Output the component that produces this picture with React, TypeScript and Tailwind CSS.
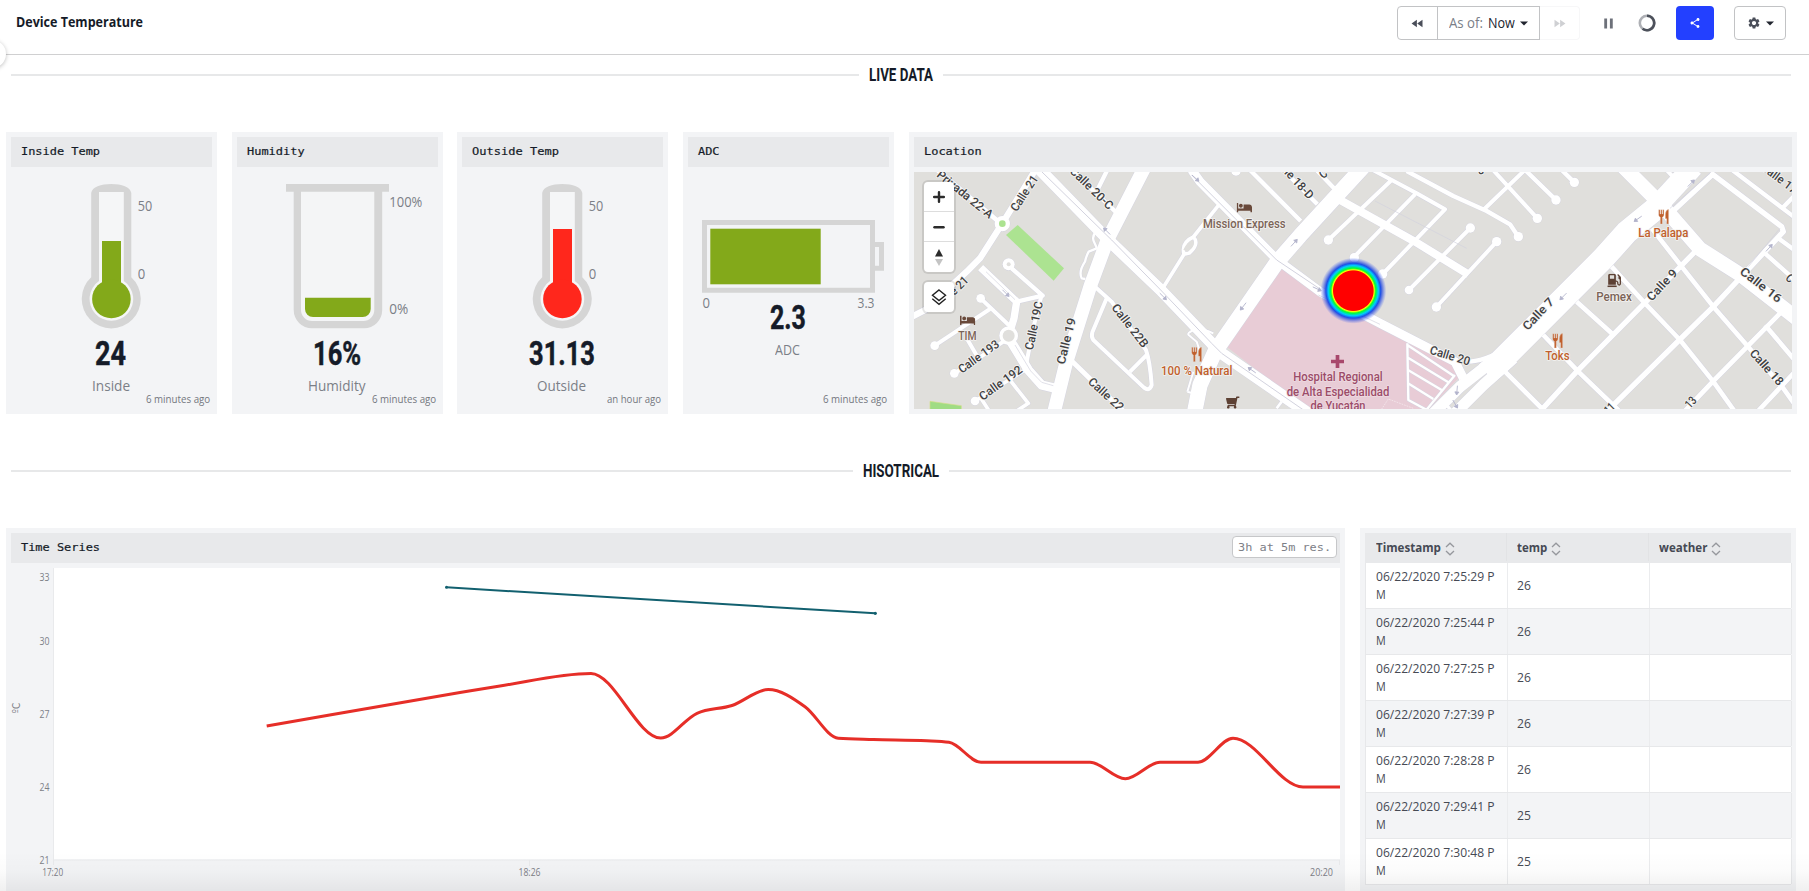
import { useLayoutEffect, useRef, type ReactNode } from "react";
import { FaBed, FaGasPump, FaShoppingCart } from "react-icons/fa";
import { MdFastForward, MdFastRewind, MdPause, MdSettings, MdShare } from "react-icons/md";

/* Single line of text condensed or widened to an exact width. */
function Fit({ w, className = "", children }: { w: number; className?: string; children: ReactNode }) {
  const ref = useRef<HTMLSpanElement>(null);
  useLayoutEffect(() => {
    const el = ref.current;
    if (el) el.style.transform = `scaleX(${w / el.offsetWidth})`;
  }, [w]);
  return (
    <span className={`block whitespace-nowrap ${className}`} style={{ width: w }}>
      <span ref={ref} className="inline-block origin-left">
        {children}
      </span>
    </span>
  );
}

const GREEN = "#83a91a";
const RED = "#ff271c";
const GREY = "#d5d5d5";

function Caret() {
  return (
    <svg width="8" height="5" viewBox="0 0 8 5" className="shrink-0">
      <path d="M0 0.4H8L4 4.6Z" fill="#20242e" />
    </svg>
  );
}

function Header() {
  return (
    <header className="relative flex h-[55px] shrink-0 items-start border-b border-[#d0d0d1] pl-4 pr-[23px] pt-1.5">
      <Fit w={127} className="mt-1.5 text-sm font-bold leading-5 text-[#151b28]">
        Device Temperature
      </Fit>
      <div className="ml-auto flex h-[34px] items-center">
        <div className="flex h-full">
          <button className="flex w-[41px] items-center justify-center rounded-l border border-[#c2c3c5] text-[#4a4e59]">
            <MdFastRewind size={15} />
          </button>
          <button className="-ml-px flex w-[103px] items-center justify-center border border-[#c2c3c5]">
            <Fit w={34} className="text-sm font-medium leading-5 text-[#7b7f89]">As of:</Fit>
            <Fit w={27} className="ml-[5px] mr-[5px] text-sm font-medium leading-5 text-[#20242e]">Now</Fit>
            <Caret />
          </button>
          <button className="flex w-10 items-center justify-center rounded-r border border-l-0 border-[#f7f7f8] text-[#cfd0d3]">
            <MdFastForward size={15} />
          </button>
        </div>
        <MdPause size={17} className="ml-[20px] text-[#6d717a]" />
        <svg width="18" height="18" viewBox="0 0 18 18" className="ml-[21px]">
          <circle cx="9" cy="9" r="7.2" fill="none" stroke="#aeb0b5" strokeWidth="2.6" />
          <path d="M9 1.8A7.2 7.2 0 1 1 4.6 14.7" fill="none" stroke="#4d515b" strokeWidth="2.6" />
        </svg>
        <button className="ml-5 flex h-full w-[38px] items-center justify-center rounded bg-[#2340ff] text-white">
          <MdShare size={12} />
        </button>
        <button className="ml-5 flex h-full w-[52px] items-center justify-center gap-[5px] rounded border border-[#c2c3c5] text-[#4a4e59]">
          <MdSettings size={14} />
          <Caret />
        </button>
      </div>
      <div className="absolute -left-[22px] top-[40px] size-7 rounded-full bg-white shadow-[0_1px_4px_rgba(0,0,0,0.25)]" />
    </header>
  );
}

function Divider({ w, children }: { w: number; children: ReactNode }) {
  return (
    <div className="flex h-10 items-center gap-2.5 pl-[11px] pr-[18px]">
      <div className="h-0.5 flex-1 bg-[#e7e8e9]" />
      <Fit w={w} className="-mt-px font-[Roboto] text-[19px] font-bold leading-10 text-[#151b28]">
        {children}
      </Fit>
      <div className="h-0.5 flex-1 bg-[#e7e8e9]" />
    </div>
  );
}

function Title({ children }: { children: string }) {
  return (
    <Fit
      w={children.length * 7.2}
      className="font-['DejaVu_Sans_Mono'] text-[11px] leading-[30px] text-[#151b28] [-webkit-text-stroke:0.2px_#151b28]"
    >
      {children}
    </Fit>
  );
}

function Card({ title, className = "", children }: { title: string; className?: string; children: ReactNode }) {
  return (
    <section className={`relative flex flex-col bg-[#f3f4f6] pt-[5px] ${className}`}>
      <div className="mx-[5px] flex h-[30px] shrink-0 bg-[#e8e9eb] px-2.5 pb-[2px]">
        <Title>{title}</Title>
      </div>
      {children}
    </section>
  );
}

type GaugeProps = { title: string; value: string; vw: number; label: string; lw: number; ago: string; aw: number; short?: boolean; children: ReactNode };

function Gauge({ title, value, vw, label, lw, ago, aw, short, children }: GaugeProps) {
  return (
    <Card title={title} className="h-[282px] w-[211px] items-stretch">
      <svg
        width="211"
        height={short ? 123 : 159}
        viewBox={short ? "0 -5 211 123" : "0 -5 211 159"}
        className="shrink-0 overflow-visible"
        fontFamily="'Open Sans', sans-serif"
        fontSize="14"
        fontWeight="500"
        fill="#7b7f87"
      >
        {children}
      </svg>
      <div className="mt-[9px] flex flex-col items-center pr-[2px]">
        <Fit w={vw} className="font-[Roboto] text-[34px] font-bold leading-9 text-[#151b28] [-webkit-text-stroke:0.5px_#151b28]">{value}</Fit>
        <Fit w={lw} className="mt-[5px] text-sm font-medium leading-5 text-[#7b7f87]">{label}</Fit>
      </div>
      <div className="absolute bottom-[7px] right-[7px]">
        <Fit w={aw} className="text-[10.5px] font-medium leading-4 text-[#74777e]">{ago}</Fit>
      </div>
    </Card>
  );
}

function Thermometer({ top, color }: { top: number; color: string }) {
  return (
    <>
      <path d="M85.2 21C86 15 95 12 105.3 12S124.500 15 125.300 21V105.300A29.500 29.500 0 1 1 85.200 105.300Z" fill={GREY} />
      <path d="M93 20H117.800V109A21.800 21.800 0 1 1 93 109Z" fill="#f5f6f7" />
      <rect x="96" y={top} width="19" height={127 - top} fill={color} />
      <circle cx="105.400" cy="127" r="19.300" fill={color} />
      <text x="131.700" y="39" textLength="14.500" lengthAdjust="spacingAndGlyphs">50</text>
      <text x="131.700" y="107" textLength="7.500" lengthAdjust="spacingAndGlyphs">0</text>
    </>
  );
}

/* ---------- Map ---------- */

type Road = [d: string, w: number];

/* Each tile is drawn in thirds of a pixel from its own left edge. */
const tiles: { x: number; roads: Road[]; dots: [number, number, number][] }[] = [
  {
    x: 900,
    roads: [
      ["M112 135L290 285", 14],
      ["M412 125L307 295L240 400L200 440L75 555L30 578", 19],
      ["M335 430L428 512L350 530", 13],
      ["M242 428L350 530L342 580L326 632", 22],
      ["M242 520L326 600", 12],
      ["M104 662L270 552", 12],
      ["M163 745L235 700L310 650M200 640L235 700", 12],
      ["M330 645L385 735L425 780L465 790", 28],
      ["M425 510L402 600L375 735", 12],
      ["M225 828L375 735M240 815L272 865M330 765L385 835L335 868", 11],
      ["M510 130L652 265M622 135L592 195", 13],
      ["M588 318C570 345 585 350 590 370L566 380Q558 395 555 410Q535 440 545 460L556 462", 7],
      ["M785 495L852 388M852 388C845 360 860 345 880 336C895 350 885 370 868 384ZM880 336L960 235", 11],
      ["M585 485L635 530L738 675Q750 710 755 780Q748 800 732 788L580 645Q573 635 577 622L620 520M690 740L740 690", 12],
      ["M510 703L680 868", 15],
      ["M940 625Q900 605 880 615T866 630L890 650L900 680M862 800L880 740M862 800L885 806", 6],
      ["M416 130L625 345L782 495L935 655L965 685L1225 865", 35],
      ["M735 125L622 345L572 480L498 715L460 870", 41],
    ],
    dots: [[307, 296, 23], [326, 418, 18], [242, 520, 13], [104, 662, 13], [163, 745, 13], [225, 828, 13], [326, 632, 28]],
  },
  {
    x: 1200,
    roads: [
      ["M140 125L302 288M240 125L352 238M340 125L402 190", 13],
      ["M-25 135L0 170L232 405L360 500L540 595L765 710L790 760", 27],
      ["M420 225L555 300L645 350L805 448", 24],
      ["M575 165L385 345M645 208L463 395M500 125L650 205L735 253L548 447M811 309L627 495M890 350L709 546", 12],
      ["M620 138L760 213L860 258L930 298L955 335", 13],
      ["M850 255L985 125M870 125L1012 280", 12],
      ["M810 710Q870 705 940 655", 13],
      ["M230 850L245 830", 8],
      ["M622 655L625 825L690 860M622 660L765 755M624 698L745 772M624 735L725 795M624 775L700 822M765 750L675 860", 7],
      ["M490 125L300 332L232 410L45 680L0 780L-18 870", 46],
      ["M940 660L780 785L700 865", 34],
      ["M940 700L850 780L765 865", 34],
      ["M730 828L760 865", 10],
    ],
    dots: [[108, 138, 14], [385, 345, 14], [463, 398, 14], [548, 447, 14], [811, 309, 14], [627, 495, 13], [890, 350, 14], [709, 546, 14], [1012, 280, 14], [955, 335, 14]],
  },
  {
    x: 1500,
    roads: [
      ["M65 125L168 225M175 125L223 172", 13],
      ["M495 130L535 172", 12],
      ["M515 262L638 148L845 305L850 320L740 438L640 545L535 648L320 860", 16],
      ["M690 130L885 278M848 248L890 205M835 340L890 380M795 385L890 470", 13],
      ["M335 425L435 535L540 645L640 770L708 865", 14],
      ["M455 310L545 425L640 545L740 660L850 790L900 860", 14],
      ["M590 375L435 533L230 740L115 865", 16],
      ["M230 530L335 625M130 630L235 740L360 860M15 740L135 860", 14],
      ["M845 560L640 768L545 868M795 600L890 712M890 735L765 868", 14],
      ["M370 125L485 240L600 372L720 448L890 580", 44],
      ["M580 125L460 255", 62],
      ["M480 240L380 322L310 400L0 710L-40 745", 70],
    ],
    dots: [[168, 225, 14], [223, 172, 14]],
  },
];

type Label = [text: string, x: number, y: number, angle: number, len: number, color?: string];

const STREET = "#3f3f42";
const BROWN = "#7b6457";
const ORANGE = "#c05f2c";
const PINK = "#9c4c69";

const labels: Label[] = [
  ["Privada 22-A", 195, 208, 39, 205],
  ["Calle 21", 373, 205, -57, 120],
  ["Calle 21", 157, 502, -45, 120],
  ["Calle 20-C", 575, 190, 44, 165],
  ["Calle 19C", 402, 602, -78, 147],
  ["Calle 19", 499, 648, -76, 142],
  ["Calle 22B", 690, 602, 52, 155],
  ["Calle 193", 236, 695, -36, 142],
  ["Calle 192", 302, 774, -36, 150],
  ["Calle 22", 618, 808, 42, 130],
  ["TIM", 202, 635, 0, 55, BROWN],
  ["100 % Natural", 890, 738, 0, 214, ORANGE],
  ["Mission Express", 1033, 298, 0, 248, BROWN],
  ["Hospital Regional", 1314, 757, 0, 268, PINK],
  ["de Alta Especialidad", 1314, 801, 0, 308, PINK],
  ["de Yucatán", 1314, 845, 0, 165, PINK],
  ["Calle 20", 1650, 692, 17, 124],
  ["Calle 18-D", 1180, 158, 47, 160],
  ["C", 1270, 147, -40, 20],
  ["8", 1745, 136, 20, 18],
  ["Calle 7", 1915, 567, -47, 118],
  ["Calle 9", 2286, 480, -47, 115],
  ["La Palapa", 2290, 325, 0, 150, ORANGE],
  ["Pemex", 2142, 516, 0, 107, BROWN],
  ["Toks", 1972, 694, 0, 73, ORANGE],
  ["Calle 16", 2583, 480, 38, 148],
  ["Calle 18", 2600, 727, 48, 132],
  ["Calle 17", 2638, 160, 37, 125],
  ["C", 2670, 460, 45, 20],
  ["13", 2372, 832, -48, 32],
  ["11", 2128, 850, -45, 30],
];

/* One-way arrows: x, y, angle */
const arrows: [number, number, number][] = [
  [620, 318, 225], [790, 515, 45], [887, 160, 42], [318, 505, 45],
  [1183, 353, -48], [1029, 545, 128], [1252, 492, 25], [1055, 735, 215], [1671, 797, 95], [1666, 838, 60],
  [2374, 174, -45], [2213, 282, 145], [1989, 515, 135], [2608, 368, -48],
];

function Utensils({ x, y }: { x: number; y: number }) {
  return (
    <g transform={`translate(${x} ${y})`} fill={ORANGE} stroke="#efe9e4" strokeWidth="1">
      <path d="M-15 -21H-11V-8H-9V-21H-5V-8H-3V-21H1V-4Q0 0 -4 2V22H-10V2Q-14 0 -15 -4Z" />
      <path d="M15 -22V22H9V6H5V-8Q6 -20 15 -22Z" />
    </g>
  );
}

function MapView() {
  return (
    <svg width="878" height="237" viewBox="914 172 878 237" className="block bg-[#e0dfdc]">
      <defs>
        <radialGradient id="heat">
          <stop offset="0.6" stopColor="#f00" />
          <stop offset="0.63" stopColor="#ff0" />
          <stop offset="0.68" stopColor="#0f3" />
          <stop offset="0.76" stopColor="#0cf" />
          <stop offset="0.83" stopColor="#1f4fe6" />
          <stop offset="0.88" stopColor="#2348e0" stopOpacity="0.65" />
          <stop offset="1" stopColor="#4060f0" stopOpacity="0" />
        </radialGradient>
      </defs>
      <g transform="translate(900 125) scale(0.33333)">
        <path d="M353 300L492 430L461 467L318 330Z" fill="#ace391" />
        <path d="M90 829L184 842V860H90Z" fill="#a0dc84" stroke="#d5e08a" strokeWidth="2" />
        <path d="M1143 430L1265 505L1520 650L1660 720L1675 760L1580 860H1230L980 665Z" fill="#e8ccd6" />
      </g>
      {tiles.map((t) => (
        <g key={t.x} transform={`translate(${t.x} 125) scale(0.33333)`} fill="none" stroke="#d3d3e0" strokeLinejoin="round">
          {t.roads.map(([d, w]) => <path key={d} d={d} strokeWidth={w + 2.5} />)}
          {t.dots.map(([x, y, r]) => <circle key={`${x}-${y}`} cx={x} cy={y} r={r} strokeWidth="2.5" />)}
        </g>
      ))}
      {tiles.map((t) => (
        <g key={t.x} transform={`translate(${t.x} 125) scale(0.33333)`} fill="none" stroke="#fff" strokeLinejoin="round">
          {t.roads.map(([d, w]) => <path key={d} d={d} strokeWidth={w} />)}
          {t.dots.map(([x, y, r]) => <circle key={`${x}-${y}`} cx={x} cy={y} r={r} fill="#fff" stroke="none" />)}
        </g>
      ))}
      <g transform="translate(900 125) scale(0.33333)">
        <circle cx="307" cy="296" r="10" fill="#ace391" />
        <circle cx="326" cy="418" r="6" fill="#e0dfdc" />
        <circle cx="326" cy="632" r="18" fill="#e0dfdc" />
        <path d="M850 374Q862 350 878 345Q886 356 876 368L862 380Z" fill="#e0dfdc" />
        <g fill="none" stroke="#d2d2de" strokeWidth="3">
          <path d="M425 140L635 345L782 495L935 655L965 685L1225 865M875 150L1130 405L1260 492" />
          <path d="M345 660L392 738L425 772L460 782M258 440L345 524" strokeWidth="2" />
          <path d="M1255 510L1440 598M1425 228L1700 370M2310 250L2430 145M2545 425L2640 310" strokeWidth="2" />
          <path d="M1440 860L1465 822L1540 850" strokeWidth="2" strokeDasharray="5 3" stroke="#f7eef2" />
        </g>
        <g fill="none" stroke="#b3b4cc" strokeWidth="2.500">
          {arrows.map(([x, y, a]) => (
            <path key={`${x}-${y}`} transform={`translate(${x} ${y}) rotate(${a})`} d="M-15 0H12M4 -6L13 0L4 6Z" fill="#b3b4cc" />
          ))}
        </g>
        <g textAnchor="middle" fontFamily="Roboto, sans-serif" fontSize="36" fontWeight="500" strokeWidth="5" strokeLinejoin="round" paintOrder="stroke">
          {labels.map(([text, x, y, a, len, color]) => (
            <text
              key={`${text}-${x}`}
              transform={`translate(${x} ${y}) rotate(${a})`}
              y={color ? 11 : 12}
              textLength={len}
              lengthAdjust="spacingAndGlyphs"
              fill={color ?? STREET}
              stroke={color === PINK ? "#eedbe2" : "#f4f3f1"}
            >
              {text}
            </text>
          ))}
        </g>
        <FaBed x={180} y={563} size={46} color="#69493a" />
        <FaBed x={1010} y={225} size={46} color="#69493a" />
        <FaGasPump x={2122} y={446} size={41} color="#5d4134" />
        <g transform="translate(1018 812) scale(-1 1)">
          <FaShoppingCart x={-1} y={0} size={41} color="#5d4134" />
        </g>
        <Utensils x={890} y={688} />
        <Utensils x={2291} y={275} />
        <Utensils x={1973} y={647} />
        <path d="M1307 690H1318V704H1332V715H1318V729H1307V715H1293V704H1307Z" fill="#a8486c" />
        <circle cx="1360" cy="497" r="99" fill="url(#heat)" />
      </g>
    </svg>
  );
}

function LocationCard() {
  const box = "rounded bg-white shadow-[0_0_0_2px_rgba(0,0,0,0.1)]";
  return (
    <Card title="Location" className="h-[282px] w-[888px]">
      <div className="relative mx-[5px] mt-[5px]">
        <MapView />
        <div className={`absolute left-2.5 top-2.5 flex h-[90px] w-[30px] flex-col divide-y divide-[#ddd] ${box}`}>
          <svg viewBox="0 0 30 30" className="h-[30px] w-full"><path d="M15 10.500V20.500M10 15.500H20" stroke="#2b2b2b" strokeWidth="2.500" strokeLinecap="round" /></svg>
          <svg viewBox="0 0 30 30" className="h-[30px] w-full"><path d="M10.300 15.700H19.700" stroke="#2b2b2b" strokeWidth="2.500" strokeLinecap="round" /></svg>
          <svg viewBox="0 0 30 30" className="h-[30px] w-full"><path d="M15 7L19 14.500H11Z" fill="#2b2b2b" /><path d="M15 24L19 17H11Z" fill="#c4c4c4" /></svg>
        </div>
        <div className={`absolute left-2.5 top-[110px] size-[30px] ${box}`}>
          <svg viewBox="0 0 30 30" className="size-full" fill="none" stroke="#222" strokeWidth="1.400">
            <path d="M15 8L21.500 13.300L15 18.500L8.500 13.300Z" />
            <path d="M8.300 16.800L15 22.300L21.700 16.800" />
          </svg>
        </div>
      </div>
    </Card>
  );
}

/* ---------- Time series ---------- */

const series: [number, number][] = [
  [266.7, 726], [460, 692.5], [500, 686], [591, 673.5], [660.7, 738], [697, 713.3], [732, 705.5], [768.3, 689.5],
  [805, 706.7], [838.3, 738.2], [873.3, 739.5], [926.7, 740.8], [949, 742.3], [981, 762.3],
  [1090, 762.3], [1125.3, 778.8], [1160, 762.3], [1198, 762.3], [1233, 738.3], [1303, 787], [1340, 787],
];

/* Monotone cubic interpolation through the points. */
function monotone(p: [number, number][]) {
  const n = p.length;
  const s = p.slice(1).map(([x, y], i) => (y - p[i][1]) / (x - p[i][0]));
  const m = p.map((_, i) => {
    if (i === 0) return s[0];
    if (i === n - 1) return s[n - 2];
    const a = s[i - 1], b = s[i];
    if (a * b <= 0) return 0;
    const h0 = p[i][0] - p[i - 1][0], h1 = p[i + 1][0] - p[i][0];
    const q = (a * h1 + b * h0) / (h0 + h1);
    return Math.sign(a) * Math.min(2 * Math.abs(a), 2 * Math.abs(b), Math.abs(q));
  });
  let d = `M${p[0][0]} ${p[0][1]}`;
  for (let i = 0; i < n - 1; i++) {
    const dx = (p[i + 1][0] - p[i][0]) / 3;
    d += `C${p[i][0] + dx} ${p[i][1] + m[i] * dx} ${p[i + 1][0] - dx} ${p[i + 1][1] - m[i + 1] * dx} ${p[i + 1][0]} ${p[i + 1][1]}`;
  }
  return d;
}

const yTicks: [string, number][] = [["33", 581], ["30", 645], ["27", 718], ["24", 791], ["21", 864]];
const xTicks: [string, number, number][] = [["17:20", 52.7, 21], ["18:26", 529.5, 22], ["20:20", 1321.5, 23]];

function TimeSeries() {
  return (
    <section className="h-[363px] w-[1339px] bg-[#f3f4f6] p-[5px] pb-0">
      <div className="flex h-[30px] items-start justify-between bg-[#e8e9eb] pl-2.5 pr-[3px]">
        <Title>Time Series</Title>
        <div className="mt-[3px] flex h-[22px] items-center justify-center rounded border border-[#c6c7c9] bg-white px-[5px]">
          <Fit w={93} className="mt-px font-['DejaVu_Sans_Mono'] text-[11px] leading-5 text-[#7d8087]">3h at 5m res.</Fit>
        </div>
      </div>
      <svg width="1329" height="328" viewBox="11 563 1329 328" className="block" fontFamily="'Open Sans', sans-serif" fontSize="10" fontWeight="500" fill="#7d8087">
        <rect x="54" y="568" width="1286" height="291.500" fill="#fff" />
        <path d="M53.500 568V865M53 860H1340M529.500 860V866M1339.500 860V865" fill="none" stroke="#e9eaec" />
        {yTicks.map(([t, y]) => (
          <text key={t} x="49.500" y={y} textAnchor="end" textLength="10" lengthAdjust="spacingAndGlyphs">{t}</text>
        ))}
        {xTicks.map(([t, x, w]) => (
          <text key={t} x={x} y="876" textAnchor="middle" textLength={w} lengthAdjust="spacingAndGlyphs">{t}</text>
        ))}
        <text transform="translate(19.500 708) rotate(-90)" textAnchor="middle" fontFamily="'DejaVu Sans', sans-serif" textLength="10.500" lengthAdjust="spacingAndGlyphs">ºC</text>
        <path d="M446.500 587.300L875 613.300" stroke="#12606f" strokeWidth="2" />
        <circle cx="446.500" cy="587.300" r="1.500" fill="#12606f" />
        <circle cx="875.300" cy="613.300" r="1.600" fill="#12606f" />
        <path d={monotone(series)} fill="none" stroke="#e62e28" strokeWidth="3" />
      </svg>
    </section>
  );
}

/* ---------- Table ---------- */

const rows: [string, string][] = [
  ["06/22/2020 7:25:29 P", "26"], ["06/22/2020 7:25:44 P", "26"], ["06/22/2020 7:27:25 P", "26"], ["06/22/2020 7:27:39 P", "26"],
  ["06/22/2020 7:28:28 P", "26"], ["06/22/2020 7:29:41 P", "25"], ["06/22/2020 7:30:48 P", "25"],
];

function Sort() {
  return (
    <svg width="10" height="14" viewBox="0 0 10 14" className="ml-[4px] mt-1" fill="none" stroke="#96989d" strokeWidth="1.300">
      <path d="M1 5L5 1.200L9 5M1 9L5 12.800L9 9" />
    </svg>
  );
}

function DataTable() {
  const cols = "grid grid-cols-[142px_142px_142px]";
  return (
    <section className="h-[363px] w-[436px] overflow-hidden bg-[#f3f4f6] px-[5px] pt-[5px]">
      <div className={`${cols} h-[30px] bg-[#e8e9eb] pb-[2px] text-[13px] font-bold leading-5 text-[#464a54]`}>
        <div className="flex items-center border-r border-[#e2e3e5] pl-[11px]"><Fit w={65}>Timestamp</Fit><Sort /></div>
        <div className="flex items-center border-r border-[#e2e3e5] pl-2.5"><Fit w={30}>temp</Fit><Sort /></div>
        <div className="flex items-center pl-2.5"><Fit w={48}>weather</Fit><Sort /></div>
      </div>
      {rows.map(([time, temp]) => (
        <div key={time} className={`${cols} h-[46px] border-b border-l border-[#e7e8ea] bg-white text-[13px] font-medium leading-[18px] text-[#464a54] odd:bg-[#f3f4f6]`}>
          <div className="border-r border-[#ebecee] pl-2.5 pt-1">
            <Fit w={119}>{time}</Fit>
            <Fit w={10}>M</Fit>
          </div>
          <div className="flex items-center border-r border-[#ebecee] pb-[2px] pl-[9px]"><Fit w={14}>{temp}</Fit></div>
          <div className="border-r border-[#e7e8ea]" />
        </div>
      ))}
    </section>
  );
}

export default function App() {
  return (
    <div className="relative flex h-[891px] w-[1809px] flex-col overflow-hidden bg-white font-['Open_Sans',sans-serif]">
      <Header />
      <Divider w={64}>LIVE DATA</Divider>
      <div className="mt-[37px] flex pl-1.5">
        <Gauge title="Inside Temp" value="24" vw={31} label="Inside" lw={38} ago="6 minutes ago" aw={64}>
          <Thermometer top={69} color={GREEN} />
        </Gauge>
        <div className="w-[15px]" />
        <Gauge title="Humidity" value="16%" vw={48} label="Humidity" lw={58} ago="6 minutes ago" aw={64}>
          <path d="M54 12H157V19.700H150.200V138A18.300 18.300 0 0 1 132 156.300H80A18.300 18.300 0 0 1 61.700 138V19.700H54Z" fill={GREY} />
          <path d="M69 19.700H142.300V138A11 11 0 0 1 131.300 149H80A11 11 0 0 1 69 138Z" fill="#f4f5f6" />
          <path d="M73 125.700H138.700V137A8 8 0 0 1 130.700 145H81A8 8 0 0 1 73 137Z" fill={GREEN} />
          <text x="157.300" y="34.700" textLength="33" lengthAdjust="spacingAndGlyphs">100%</text>
          <text x="157.300" y="142" textLength="19" lengthAdjust="spacingAndGlyphs">0%</text>
        </Gauge>
        <div className="w-[14px]" />
        <Gauge title="Outside Temp" value="31.13" vw={66} label="Outside" lw={49} ago="an hour ago" aw={54}>
          <Thermometer top={57} color={RED} />
        </Gauge>
        <div className="w-[15px]" />
        <Gauge title="ADC" value="2.3" vw={36} label="ADC" lw={25} ago="6 minutes ago" aw={64} short>
          <path d="M21.500 50.500H189.500V118.200H21.500ZM192 72.500H198.500V96.200H192" fill="none" stroke={GREY} strokeWidth="5" />
          <rect x="27.300" y="56.700" width="110.400" height="55.600" fill={GREEN} />
          <text x="19.500" y="136" textLength="7.500" lengthAdjust="spacingAndGlyphs">0</text>
          <text x="174.500" y="136" textLength="17" lengthAdjust="spacingAndGlyphs">3.3</text>
        </Gauge>
        <div className="w-[15px]" />
        <LocationCard />
      </div>
      <div className="h-[37px]" />
      <Divider w={76}>HISOTRICAL</Divider>
      <div className="mt-[37px] flex gap-[15px] pl-1.5">
        <TimeSeries />
        <DataTable />
      </div>
      <div className="pointer-events-none absolute inset-x-0 bottom-0 h-10 bg-linear-to-b from-transparent via-black/[0.015] to-black/[0.06]" />
    </div>
  );
}
